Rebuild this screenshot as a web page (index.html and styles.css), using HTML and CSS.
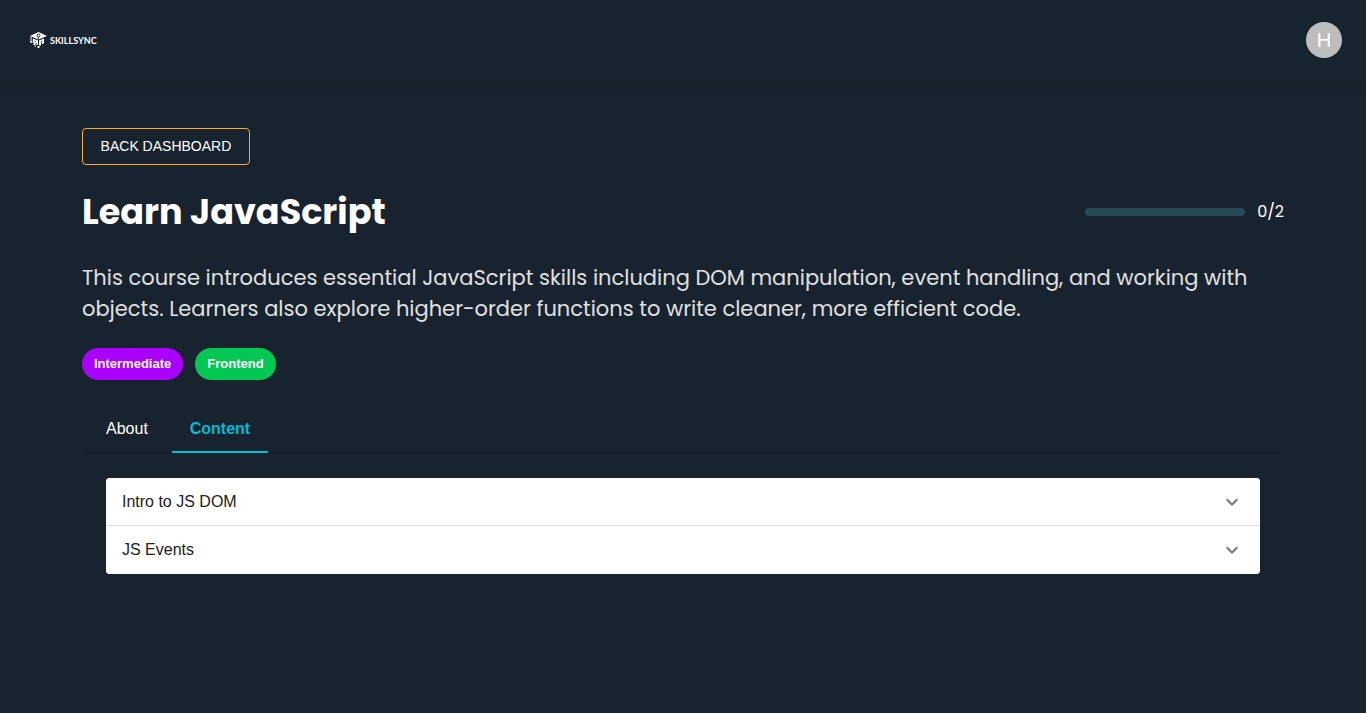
FILE: index.html
```html
<!DOCTYPE html>
<html lang="en">
<head>
  <meta charset="utf-8">
  <meta name="viewport" content="width=device-width, initial-scale=1">
  <title>Learn JavaScript - SkillSync</title>
  <link rel="stylesheet" href="styles.css">
</head>
<body>
  <header class="topbar">
    <a class="brand" href="#">
      <svg class="brand-mark" viewBox="0 0 34 34" aria-hidden="true">
        <path fill="#fff" d="M17 0 34 8 17 15 0 8Z"/>
        <path fill="#fff" d="M6 13 16 17V26H13V22H11V26H7V21H5Z"/>
        <path fill="#fff" d="M18 17 28 13V22L26 24H24V21H22V27H18Z"/>
        <path fill="#fff" d="M1 9h2v9H1zM15 28h4v4h-4zM9 27h3v2H9z"/>
        <circle cx="17" cy="7" r="3" fill="none" stroke="#17232e" stroke-width="2"/>
        <path fill="none" stroke="#17232e" stroke-width="1.500" d="M17 10v5M9 18l3 1M25 18l-4 2"/>
        <circle cx="2" cy="20" r="2" fill="#fff"/>
      </svg>
      <span class="brand-name">SKILLSYNC</span>
    </a>
    <button class="avatar" type="button" aria-label="Account H">H</button>
  </header>

  <main class="course">
    <a class="back" href="#">BACK DASHBOARD</a>

    <div class="heading">
      <h1 class="title">Learn JavaScript</h1>
      <div class="progress">
        <div class="track" role="progressbar" aria-label="Course progress" aria-valuemin="0" aria-valuemax="2" aria-valuenow="0"></div>
        <span class="count">0/2</span>
      </div>
    </div>

    <p class="summary">This course introduces essential JavaScript skills including DOM manipulation, event handling, and working with objects. Learners also explore higher-order functions to write cleaner, more efficient code.</p>

    <div class="chips">
      <span class="chip chip-level">Intermediate</span>
      <span class="chip chip-topic">Frontend</span>
    </div>

    <div class="tabs" role="tablist">
      <button class="tab" type="button" role="tab" aria-selected="false">About</button>
      <button class="tab tab-active" type="button" role="tab" aria-selected="true">Content</button>
    </div>

    <section class="panel" role="tabpanel" aria-label="Content">
      <div class="accordion">
        <button class="lesson" type="button" aria-expanded="false">
          <span>Intro to JS DOM</span>
          <svg class="chevron" viewBox="0 0 24 24" aria-hidden="true"><path d="M16.590 8.590 12 13.170 7.410 8.590 6 10l6 6 6-6z"/></svg>
        </button>
        <button class="lesson" type="button" aria-expanded="false">
          <span>JS Events</span>
          <svg class="chevron" viewBox="0 0 24 24" aria-hidden="true"><path d="M16.590 8.590 12 13.170 7.410 8.590 6 10l6 6 6-6z"/></svg>
        </button>
      </div>
    </section>
  </main>
</body>
</html>
```
FILE: styles.css
```css
* {
  box-sizing: border-box;
}

body {
  margin: 0;
  min-height: 100vh;
  background: #17232e;
  color: #fff;
  font-family: "Liberation Sans", Arial, sans-serif;
  font-size: 16px;
}

button {
  margin: 0;
  border: 0;
  font: inherit;
  cursor: pointer;
}

.topbar {
  display: flex;
  align-items: center;
  justify-content: space-between;
  height: 80px;
  padding: 0 24px 0 30px;
  box-shadow: 0 4px 12px rgba(0, 0, 0, 0.05);
}

.brand {
  display: flex;
  align-items: center;
  gap: 3px;
  color: #fff;
  text-decoration: none;
}

.brand-mark {
  width: 17px;
  height: 17px;
}

.brand-name {
  font-family: Lato, sans-serif;
  font-size: 9px;
  font-weight: 700;
}

.avatar {
  width: 36px;
  height: 36px;
  padding: 0;
  border-radius: 50%;
  background: #bdbdbd;
  color: #fff;
  font-size: 20px;
}

.course {
  padding: 48px 6%;
}

.back {
  display: inline-block;
  min-width: 168px;
  padding: 6px 15px;
  border: 1px solid #ffa726;
  border-radius: 4px;
  color: #fff;
  font-size: 14px;
  line-height: 23px;
  text-align: center;
  text-decoration: none;
}

.heading {
  display: flex;
  align-items: center;
  justify-content: space-between;
  margin-top: 20px;
}

.title {
  margin: 0;
  font-family: Poppins, Inter, sans-serif;
  font-size: 35px;
  font-weight: 700;
  line-height: 53px;
}

.progress {
  display: flex;
  align-items: center;
  gap: 12px;
}

.track {
  width: 160px;
  height: 8px;
  border-radius: 4px;
  background: #284a57;
}

.count {
  font-family: Poppins, Inter, sans-serif;
  font-weight: 400;
  line-height: 24px;
}

.summary {
  margin: 24px 0;
  color: #e0e0e0;
  font-family: Poppins, Inter, sans-serif;
  font-size: 21px;
  line-height: 31px;
}

.chips {
  display: flex;
  gap: 12px;
}

.chip {
  padding: 0 12px;
  border-radius: 16px;
  font-size: 13px;
  font-weight: 700;
  line-height: 32px;
}

.chip-level {
  background: #aa00ff;
}

.chip-topic {
  background: #00c853;
}

.tabs {
  display: flex;
  margin-top: 25px;
  border-bottom: 1px solid #141e27;
}

.tab {
  min-width: 90px;
  height: 48px;
  padding: 2px 16px 0;
  border-bottom: 2px solid transparent;
  background: transparent;
  color: #fff;
}

.tab-active {
  min-width: 96px;
  border-color: #00bcd4;
  color: #00bcd4;
  font-weight: 700;
}

.panel {
  padding: 24px;
}

.accordion {
  overflow: hidden;
  border-radius: 4px;
  background: #fff;
}

.lesson {
  display: flex;
  align-items: center;
  justify-content: space-between;
  width: 100%;
  height: 48px;
  padding: 0 16px;
  border-bottom: 1px solid #dedede;
  background: #fff;
  color: #212121;
}

.lesson:last-child {
  border-bottom: 0;
}

.chevron {
  width: 24px;
  height: 24px;
  fill: #757575;
}
```
